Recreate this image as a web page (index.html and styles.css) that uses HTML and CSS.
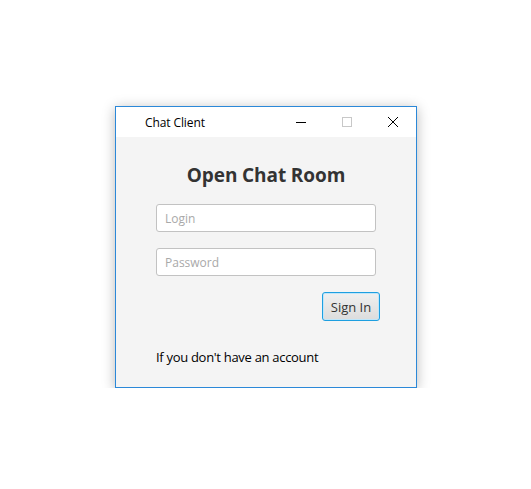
FILE: index.html
```html
<!DOCTYPE html>
<html>
<head>
<meta charset="utf-8">
<link rel="stylesheet" href="styles.css">
</head>
<body>
<div class="window">
  <div class="titlebar">
    <span class="title">Chat Client</span>
    <div class="controls">
      <span class="ctl"><svg width="10" height="10" viewBox="0 0 10 10"><path d="M0 5.5H10" stroke="#000" stroke-width="1"/></svg></span>
      <span class="ctl"><svg width="10" height="10" viewBox="0 0 10 10"><rect x="0.5" y="0.5" width="9" height="9" fill="none" stroke="#c8c8c8" stroke-width="1"/></svg></span>
      <span class="ctl"><svg width="10" height="10" viewBox="0 0 10 10"><path d="M0 0L10 10M10 0L0 10" stroke="#000" stroke-width="1"/></svg></span>
    </div>
  </div>
  <div class="content">
    <h1 class="heading">Open Chat Room</h1>
    <div class="field"><span class="ph">Login</span></div>
    <div class="field"><span class="ph">Password</span></div>
    <div class="btnrow"><button class="btn">Sign In</button></div>
    <p class="note">If you don't have an account</p>
  </div>
</div>
</body>
</html>
```
FILE: styles.css
```css
html, body { margin: 0; padding: 0; background: #fff; }
body { padding: 106px 0 0 115px; font-family: "Open Sans", "Noto Sans", sans-serif; }
.window {
  width: 300px; height: 280px;
  border: 1px solid #2b88d8;
  background: #f4f4f4;
  box-shadow: 0 2px 12px rgba(0,0,0,0.28);
  display: flex; flex-direction: column;
}
.titlebar {
  height: 30px; background: #fff;
  display: flex; align-items: center;
}
.title { font-size: 12px; color: #000; margin-left: 29px; letter-spacing: -0.1px; }
.controls { margin-left: auto; display: flex; height: 30px; }
.ctl { width: 46px; display: flex; align-items: center; justify-content: center; }
.content { display: flex; flex-direction: column; padding: 0 40px 0 40px; }
.heading {
  margin: 25px 0 0 0; font-size: 19px; font-weight: 700; color: #333;
  text-align: center; line-height: 26px; letter-spacing: -0.1px;
}
.field {
  width: 218px; height: 26px; margin-top: 16px;
  border: 1px solid #c2c2c2; border-radius: 3px; background: #fff;
  display: flex; align-items: center;
}
.field + .field { margin-top: 16px; }
.ph { font-size: 12px; color: #a9a9a9; margin-left: 8px; }
.btnrow { display: flex; justify-content: flex-end; width: 224px; margin-top: 16px; }
.btn {
  width: 58px; height: 29px; padding: 0;
  border: 1px solid #1e9fe0; border-radius: 3px;
  box-shadow: inset 0 0 0 1px #bfe6fa;
  background: linear-gradient(#f0f0f0, #dcdcdc);
  font-family: inherit; font-size: 13px; color: #333;
}
.note { margin: 27px 0 0 0; font-size: 13px; color: #000; line-height: 18px; letter-spacing: -0.3px; }
```
